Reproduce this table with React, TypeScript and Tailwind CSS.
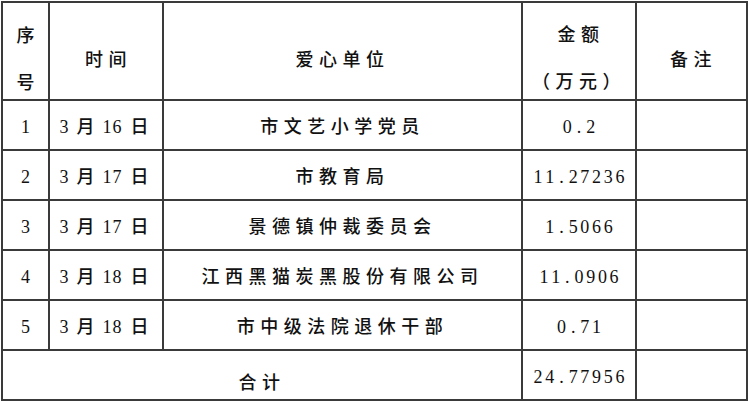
import React from "react";

const rows = [
  { n: "1", m: "16", unit: "市文艺小学党员", amt: "0.2" },
  { n: "2", m: "17", unit: "市教育局", amt: "11.27236" },
  { n: "3", m: "17", unit: "景德镇仲裁委员会", amt: "1.5066" },
  { n: "4", m: "18", unit: "江西黑猫炭黑股份有限公司", amt: "11.0906" },
  { n: "5", m: "18", unit: "市中级法院退休干部", amt: "0.71" },
];

function Num({ v }: { v: string }) {
  return (
    <span className="inline-flex">
      {v.split("").map((c, i) => (
        <span key={i} className="inline-block w-[11.7px] text-center">
          {c}
        </span>
      ))}
    </span>
  );
}

function DateCell({ m }: { m: string }) {
  return (
    <div className="flex items-center justify-center gap-[8px] pt-[4px] pr-[4px]">
      <span>3</span>
      <span>月</span>
      <span className="tracking-[1px]">{m}</span>
      <span>日</span>
    </div>
  );
}

export default function App() {
  const cell = "bg-white flex items-center justify-center";
  return (
    <div className="w-[750px] h-[402px] bg-white font-['Liberation_Serif','Noto_Sans_CJK_SC',serif] font-medium text-[18px] text-[#111111] leading-none">
      <div className="ml-[1px] mt-[1px] w-[747px] grid grid-cols-[45px_112px_357px_112px_109px] grid-rows-[96px_48px_48px_48px_48px_48px_48px] gap-[2px] p-[2px] bg-[#3a3a3a]">
        {/* header */}
        <div className={`${cell} flex-col leading-[47px] pt-[18px]`}>
          <span>序</span>
          <span>号</span>
        </div>
        <div className={`${cell} pt-[18px] tracking-[5.5px] pl-[5px]`}>时间</div>
        <div className={`${cell} pt-[18px] tracking-[5.5px]`}>爱心单位</div>
        <div className={`${cell} flex-col leading-[47px] pt-[16px] tracking-[5.5px]`}>
          <span className="pl-[4px]">金额</span>
          <span>（万元）</span>
        </div>
        <div className={`${cell} pt-[18px] tracking-[5.5px] pl-[4px]`}>备注</div>

        {rows.map((r) => (
          <React.Fragment key={r.n}>
            <div className={`${cell} pt-[4px]`}>{r.n}</div>
            <div className="bg-white flex items-center justify-center">
              <DateCell m={r.m} />
            </div>
            <div className={`${cell} pt-[4px] tracking-[5.5px]`}>{r.unit}</div>
            <div className={`${cell} pt-[4px]`}>
              <Num v={r.amt} />
            </div>
            <div className="bg-white"></div>
          </React.Fragment>
        ))}

        <div className={`${cell} col-span-3 pt-[16px] tracking-[5.5px]`}>合计</div>
        <div className={`${cell} pt-[4px]`}>
          <Num v="24.77956" />
        </div>
        <div className="bg-white"></div>
      </div>
    </div>
  );
}
